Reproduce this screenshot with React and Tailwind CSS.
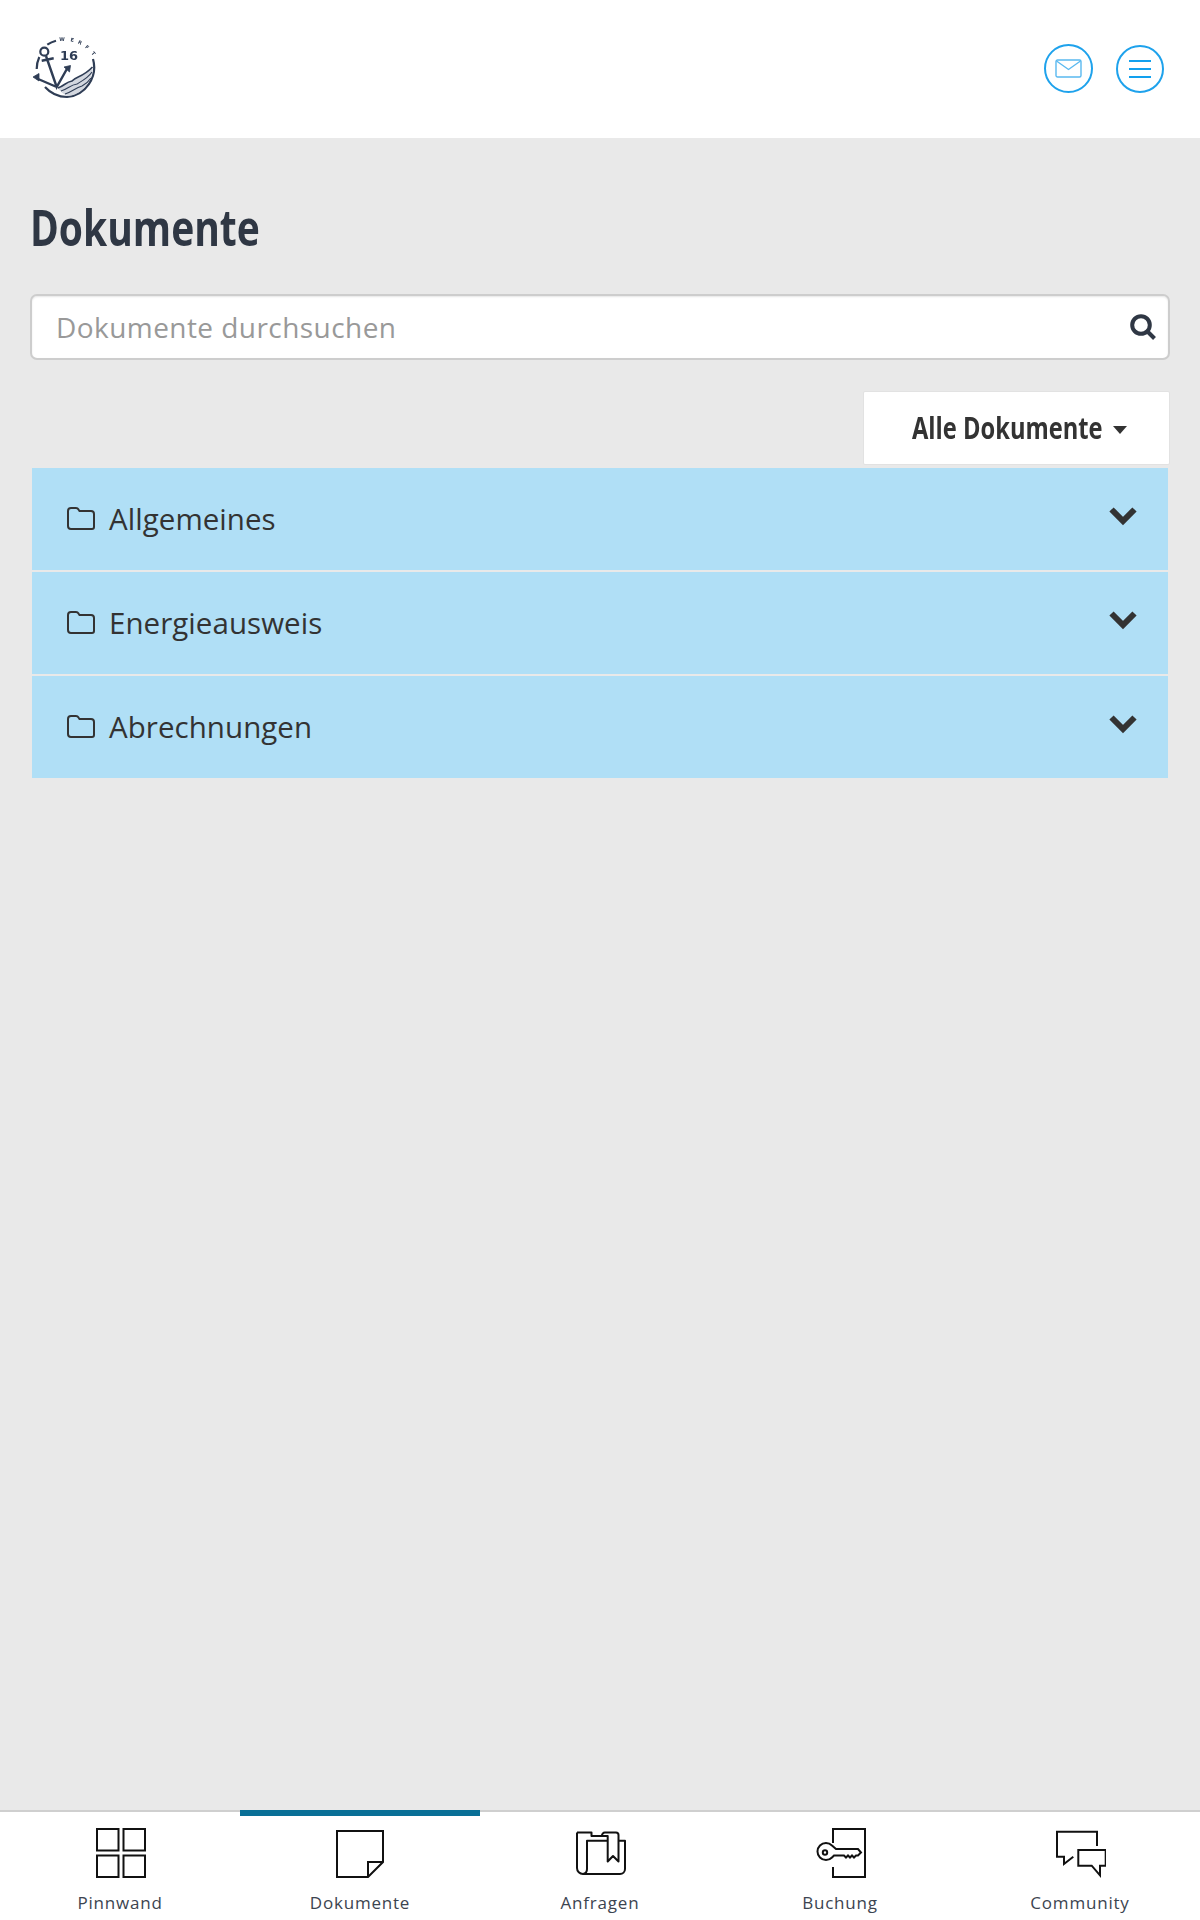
const OS = { fontFamily: '"Open Sans", "Noto Sans", sans-serif' };

function Folder() {
  return (
    <svg width="30" height="24" viewBox="0 0 30 24" fill="none" stroke="#333" strokeWidth="2" className="shrink-0">
      <path d="M2 4 a3 3 0 0 1 3-3 h5 a3 3 0 0 1 2.5 1.5 l1 1.5 h11.5 a3 3 0 0 1 3 3 v13 a2 2 0 0 1-2 2 h-21 a3 3 0 0 1-3-3 z" />
    </svg>
  );
}

function Row({ label }) {
  return (
    <div className="h-[102px] bg-[#b0dff6] flex items-center pl-[34px] pr-[31px]">
      <Folder />
      <span className="ml-[13px] text-[29.5px] leading-none text-[#333] pb-[1px] tracking-[0.05px]" style={OS}>{label}</span>
      <svg width="28" height="20" viewBox="0 0 28 20" className="ml-auto mb-[6px]" fill="none" stroke="#333" strokeWidth="6">
        <path d="M2.5 3.5 L14 15 L25.5 3.5" />
      </svg>
    </div>
  );
}

const icons = {
  Pinnwand: (
    <svg width="50" height="50" viewBox="0 0 50 50" fill="none" stroke="#111" strokeWidth="2" className="ml-[2px]">
      <rect x="1" y="1" width="21.5" height="21.5" />
      <rect x="27.5" y="1" width="21.5" height="21.5" />
      <rect x="1" y="27.5" width="21.5" height="21.5" />
      <rect x="27.5" y="27.5" width="21.5" height="21.5" />
    </svg>
  ),
  Dokumente: (
    <svg width="50" height="50" viewBox="0 0 50 50" fill="none" stroke="#111" strokeWidth="2">
      <path d="M2 3 H48 V34 L33 49 H2 Z" />
      <path d="M33 49 V34 H48" />
    </svg>
  ),
  Anfragen: (
    <svg width="50" height="50" viewBox="0 0 50 50" fill="none" stroke="#111" strokeWidth="2" strokeLinejoin="round" className="ml-[2px]">
      <path d="M1 4.5 H15.5 V8 H26 a3 3 0 0 1 3-3.5 H40 a2.5 2.5 0 0 1 2.5 2.5 V33.5 L37 28 L31.7 33.5 V8 H26" />
      <path d="M31.7 12.7 H11 V41 a5 5 0 0 1-4 5 a6 6 0 0 1-6-6 V4.5" />
      <path d="M7 46 H44 a5 5 0 0 0 5-5 V12.7 H42.5" />
    </svg>
  ),
  Buchung: (
    <svg width="50" height="50" viewBox="0 0 50 50" fill="none" stroke="#111" strokeWidth="2" className="ml-[2px]">
      <path d="M17 15 V1 H49 V49 H17 V39" />
      <path d="M16 17.5 A8.5 8.5 0 1 0 16 29.5 L18 27.5 H28 l2 2 2-2 2 2 2-2 2 2 2-2 H42 L45 24.5 L42 21 H20 Z" />
      <circle cx="9" cy="24.5" r="2.2" />
    </svg>
  ),
  Community: (
    <svg width="50" height="50" viewBox="0 0 50 50" fill="none" stroke="#111" strokeWidth="2" className="ml-[2px]">
      <path d="M41 18 V3.7 H1 V28.7 H8 V36 L17.3 28.7" />
      <path d="M22.3 22 H49.7 V37.7 H44 V47.3 L35.7 37.7 H22.3 Z" />
    </svg>
  ),
};

function Tab({ label, active }) {
  return (
    <div className="relative flex flex-col items-center pt-[16px]">
      {active && <div className="absolute left-0 right-0 top-[-2px] h-[6px] bg-[#086f96]" />}
      {icons[label]}
      <span className="mt-[15px] text-[17px] leading-[20px] tracking-[0.8px] text-[#3c4450]" style={OS}>{label}</span>
    </div>
  );
}

function Logo() {
  const c = "#2f3d55";
  return (
    <svg width="66" height="66" viewBox="0 0 66 66" fill="none" stroke={c} className="blur-[0.4px]">
      <path d="M4.7 33 A29 29 0 0 1 7.3 21" strokeWidth="2.2" />
      <path d="M15.3 8.7 A29 29 0 0 1 24 4.7" strokeWidth="2.2" />
      <path d="M61 23 A30 30 0 0 1 35 61 A30 30 0 0 1 13 51" strokeWidth="2.2" />
      <circle cx="12.3" cy="15.7" r="4" strokeWidth="2.2" />
      <path d="M14 20 L24.7 51 L36 31 M9.7 24.7 L21.7 22.3 M5 42.5 L24.7 51" strokeWidth="2.4" />
      <path d="M1 41 L7 37.5 L7 45 Z M38.5 29.5 L32 31 L37.5 36 Z" fill={c} strokeWidth="0.8" />
      <path d="M26 52 C32 50 34 46 40 45 C44 40 50 42 60.5 31 C61 44 50 60 35 60 C31 58 28 55 26 52 Z" stroke="none" fill="#d3d7df" />
      <path d="M26 52 C32 50 34 46 40 45 C44 40 50 42 60.5 31" strokeWidth="1.6" />
      <path d="M29 55 C36 53 38 49 45 48 C50 45 56 42 60 36" strokeWidth="1.1" />
      <path d="M33 58 C40 56 43 52 50 50 C54 48 57 45 59 42" strokeWidth="1.1" />
      <text x="28" y="23.7" fontFamily="'DejaVu Sans', sans-serif" fontWeight="700" fontSize="13" fill={c} stroke="none">16</text>
      <g fontFamily="'DejaVu Sans', sans-serif" fontWeight="700" fontSize="5" fill={c} stroke="none" textAnchor="middle">
        <text x="30" y="5">W</text>
        <text x="40" y="5.6" transform="rotate(12 40 5.6)">E</text>
        <text x="47.3" y="8.2" transform="rotate(25 47.3 8.2)">R</text>
        <text x="54" y="12.6" transform="rotate(38 54 12.6)">F</text>
        <text x="60" y="18.6" transform="rotate(50 60 18.6)">T</text>
      </g>
    </svg>
  );
}

export default function App() {
  return (
    <div className="w-[1200px] h-[1920px] bg-[#e9e9e9] flex flex-col" style={OS}>
      <header className="h-[138px] bg-white flex items-center justify-between pl-[32px] pr-[36px] pb-[1px] shrink-0">
        <Logo />
        <div className="flex items-center gap-[23px]">
          <div className="w-[49px] h-[49px] rounded-full border-2 border-[#1ea2ec] flex items-center justify-center">
            <svg width="27" height="19" viewBox="0 0 27 19" fill="none" stroke="#5ab9f0" strokeWidth="1.4">
              <rect x="1" y="1" width="25" height="17" rx="1.5" />
              <path d="M1.5 2 L13.5 10.5 L25.5 2" />
            </svg>
          </div>
          <div className="w-[48px] h-[48px] rounded-full border-2 border-[#1ea2ec] flex flex-col items-center justify-center gap-[6px]">
            <div className="w-[22px] h-[2px] bg-[#12a0ee]" />
            <div className="w-[22px] h-[2px] bg-[#12a0ee]" />
            <div className="w-[22px] h-[2px] bg-[#12a0ee]" />
          </div>
        </div>
      </header>

      <main className="flex-1 px-[30px] flex flex-col">
        <h1 className="mt-[62px] h-[54px] text-[50px] leading-[54px] font-bold text-[#2f3744] origin-left scale-x-[0.78] whitespace-nowrap">Dokumente</h1>

        <div className="mt-[40px] h-[66px] bg-white border-2 border-[#cdcdcd] rounded-[7px] flex items-center pl-[24px] pr-[12px] shadow-[inset_0_1px_2px_rgba(0,0,0,0.1)]">
          <span className="text-[28px] leading-none text-[#999] tracking-[0.44px]">Dokumente durchsuchen</span>
          <svg width="26" height="26" viewBox="0 0 26 26" className="ml-auto" fill="none" stroke="#2f3744" strokeWidth="4">
            <circle cx="11" cy="11" r="8.8" />
            <path d="M17 17 L24.5 24.5" />
          </svg>
        </div>

        <div className="mt-[31px] flex justify-end">
          <div className="w-[307px] h-[74px] bg-white border border-[#e2e2e2] rounded-[2px] flex items-center pl-[48px]">
            <span className="w-[201px] text-[30px] leading-none font-bold text-[#333] origin-left scale-x-[0.79] whitespace-nowrap">Alle Dokumente</span>
            <div className="mt-[4px] w-0 h-0 border-x-[7.5px] border-x-transparent border-t-[8px] border-t-[#333]" />
          </div>
        </div>

        <div className="mt-[3px] mx-[2px] flex flex-col gap-[2px]">
          <Row label="Allgemeines" />
          <Row label="Energieausweis" />
          <Row label="Abrechnungen" />
        </div>
      </main>

      <nav className="h-[110px] bg-white border-t-2 border-[#cfcfcf] grid grid-cols-5 shrink-0">
        <Tab label="Pinnwand" />
        <Tab label="Dokumente" active />
        <Tab label="Anfragen" />
        <Tab label="Buchung" />
        <Tab label="Community" />
      </nav>
    </div>
  );
}
